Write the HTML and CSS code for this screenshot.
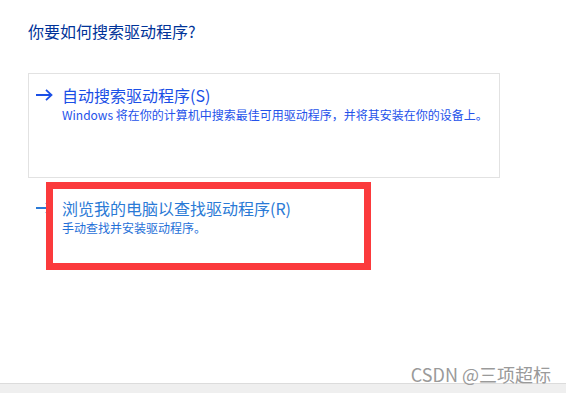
FILE: index.html
```html
<!DOCTYPE html>
<html lang="zh-CN">
<head>
<meta charset="UTF-8">
<meta name="viewport" content="width=device-width, initial-scale=1.0">
<title>更新驱动程序</title>
<link rel="stylesheet" href="styles.css">
</head>
<body>
<div class="page">
  <h1 class="instruction">你要如何搜索驱动程序?</h1>

  <div class="option card">
    <span class="arrow">
      <svg width="17" height="12" viewBox="0 0 17 12"><path d="M0 6 H15.5 M10 0.8 L15.5 6 L10 11.2" fill="none" stroke="currentColor" stroke-width="1.8"/></svg>
    </span>
    <div class="option-text">
      <div class="option-title">自动搜索驱动程序(S)</div>
      <div class="option-desc">Windows 将在你的计算机中搜索最佳可用驱动程序，并将其安装在你的设备上。</div>
    </div>
  </div>

  <div class="option second">
    <span class="arrow">
      <svg width="17" height="12" viewBox="0 0 17 12"><path d="M0 6 H15.5 M10 0.8 L15.5 6 L10 11.2" fill="none" stroke="currentColor" stroke-width="1.8"/></svg>
    </span>
    <div class="option-text">
      <div class="option-title">浏览我的电脑以查找驱动程序(R)</div>
      <div class="option-desc">手动查找并安装驱动程序。</div>
    </div>
  </div>
</div>

<div class="highlight"></div>
<div class="watermark">CSDN @三项超标</div>
<div class="footer-bar"></div>
</body>
</html>
```

FILE: styles.css
```css
html, body {
  margin: 0;
  padding: 0;
  height: 100%;
}
body {
  font-family: "Noto Sans CJK SC", "Noto Sans", sans-serif;
  background-color: #ffffff;
  position: relative;
  overflow: hidden;
  display: flex;
  flex-direction: column;
}
.page {
  flex: 1;
  padding: 21px 0 0 28px;
}
.instruction {
  margin: 0;
  font-size: 16px;
  line-height: 20px;
  font-weight: normal;
  color: #003399;
}
.option {
  display: flex;
  align-items: flex-start;
  box-sizing: border-box;
  width: 472px;
  padding: 10px 0 0 7px;
  border: 1px solid transparent;
}
.card {
  margin-top: 32px;
  height: 105px;
  border-color: #e2e2e2;
  color: #1a4fe6;
}
.second {
  margin-top: 8px;
  color: #2a7ad6;
}
.arrow {
  width: 26px;
  height: 22px;
  display: flex;
  align-items: center;
  flex-shrink: 0;
}
.arrow svg {
  display: block;
}
.option-title {
  font-size: 16px;
  line-height: 22px;
  white-space: nowrap;
}
.option-desc {
  font-size: 12px;
  line-height: 17px;
  white-space: nowrap;
}
.card .option-desc {
  color: #2452ea;
}
.second .option-desc {
  color: #1f70d8;
}
.highlight {
  position: absolute;
  left: 46px;
  top: 182px;
  width: 325px;
  height: 88px;
  box-sizing: border-box;
  border: 7px solid #fb3a3c;
}
.watermark {
  position: absolute;
  right: 15px;
  bottom: 9px;
  font-size: 18px;
  line-height: 20px;
  color: #9a9a9a;
}
.footer-bar {
  height: 9px;
  border-top: 1px solid #dcdcdc;
  background-color: #efefef;
}
```
